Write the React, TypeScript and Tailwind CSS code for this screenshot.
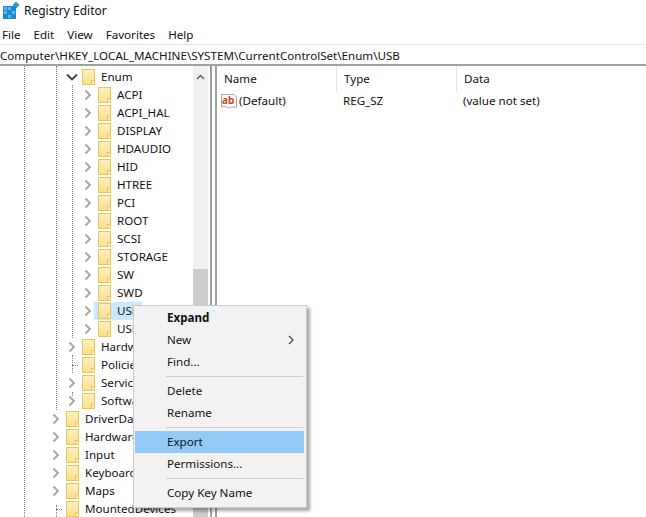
import React from 'react';

interface TreeRow {
  label: string;
  level: 0 | 1 | 2;
  chevron?: 'right' | 'down' | 'none';
  selected?: boolean;
}

const rows: TreeRow[] = [
  { label: 'Enum', level: 1, chevron: 'down' },
  { label: 'ACPI', level: 2 },
  { label: 'ACPI_HAL', level: 2 },
  { label: 'DISPLAY', level: 2 },
  { label: 'HDAUDIO', level: 2 },
  { label: 'HID', level: 2 },
  { label: 'HTREE', level: 2 },
  { label: 'PCI', level: 2 },
  { label: 'ROOT', level: 2 },
  { label: 'SCSI', level: 2 },
  { label: 'STORAGE', level: 2 },
  { label: 'SW', level: 2 },
  { label: 'SWD', level: 2 },
  { label: 'USB', level: 2, selected: true },
  { label: 'USBSTOR', level: 2 },
  { label: 'Hardware', level: 1 },
  { label: 'Policies', level: 1, chevron: 'none' },
  { label: 'Services', level: 1 },
  { label: 'Software', level: 1 },
  { label: 'DriverDatabase', level: 0 },
  { label: 'HardwareConfig', level: 0 },
  { label: 'Input', level: 0 },
  { label: 'Keyboard Layout', level: 0 },
  { label: 'Maps', level: 0 },
  { label: 'MountedDevices', level: 0, chevron: 'none' },
];

const levelPad = ['pl-[50px]', 'pl-[66px]', 'pl-[82px]'];

const RegeditIcon = () => (
  <svg width="20" height="20" viewBox="0 0 20 20" className="shrink-0">
    <rect x="3" y="5" width="13" height="13" fill="#1b8ad3" />
    <g fill="#5cb8ec">
      <rect x="4" y="6" width="3" height="3" />
      <rect x="8" y="6" width="3" height="3" />
      <rect x="4" y="10" width="3" height="3" />
      <rect x="12" y="10" width="3" height="3" />
      <rect x="8" y="14" width="3" height="3" />
    </g>
    <path d="M16 1l3 3-3 3-3-3z" fill="#2a9ad8" stroke="#0f6ea8" strokeWidth="0.6" />
  </svg>
);

const FolderIcon = () => (
  <svg width="13" height="16" viewBox="0 0 13 16" className="shrink-0">
    <defs>
      <linearGradient id="folderFill" x1="0" y1="0" x2="0" y2="1">
        <stop offset="0%" stopColor="#fdf0c0" />
        <stop offset="100%" stopColor="#fcdf8c" />
      </linearGradient>
    </defs>
    <rect x="0.5" y="0.5" width="12" height="15" fill="url(#folderFill)" stroke="#eac655" />
    <rect x="9.5" y="11.5" width="3" height="4" fill="#fdf0c0" stroke="#eac655" />
  </svg>
);

const Chevron = ({ kind }: { kind: 'right' | 'down' | 'none' }) => {
  if (kind === 'none') {
    return <span className="w-[6px] ml-[6px] shrink-0 self-center border-t border-dotted border-[#808080]" />;
  }
  return (
    <svg width="12" height="12" viewBox="0 0 12 12" className="shrink-0">
      {kind === 'right' ? (
        <path d="M3.5 1.5L8 6l-4.5 4.5" fill="none" stroke="#a6a6a6" strokeWidth="1.8" />
      ) : (
        <path d="M1 3.5l5 5 5-5" fill="none" stroke="#404040" strokeWidth="1.8" />
      )}
    </svg>
  );
};

const AbIcon = () => (
  <svg width="16" height="16" viewBox="0 0 16 16" className="shrink-0">
    <path d="M0.5 1.5H13l2.5 2.5V14c-2 1.5-3 -1-5 0s-3 1-5 0-3-1-5 0z" fill="#fff" stroke="#a8a8a8" />
    <text x="1" y="10.5" fontSize="10" fontWeight="700" fill="#d9431e">ab</text>
  </svg>
);

const Separator = () => <div className="h-px bg-[#cfcfcf] ml-[31px] mr-[1px] my-[3px]" />;

const MenuItem = ({ label, bold, active, arrow }: { label: string; bold?: boolean; active?: boolean; arrow?: boolean }) => (
  <div className={`h-[22px] flex items-center justify-between pl-[32px] pr-[10px] ${active ? 'bg-[#91c9f7]' : ''} ${bold ? 'font-bold' : ''}`}>
    <span>{label}</span>
    {arrow && (
      <svg width="6" height="10" viewBox="0 0 6 10">
        <path d="M1 1l4 4-4 4" fill="none" stroke="#404040" strokeWidth="1.2" />
      </svg>
    )}
  </div>
);

export default function App() {
  return (
    <div className="relative w-[646px] h-[517px] overflow-hidden bg-white text-[#111] text-[11.6px] font-['Noto_Sans',sans-serif] flex flex-col">
      {/* Title bar */}
      <div className="h-[22px] flex items-center shrink-0">
        <RegeditIcon />
        <span className="ml-[4px] text-[12px]">Registry Editor</span>
      </div>

      {/* Menu */}
      <div className="h-[22px] flex items-center shrink-0 pt-[4px] pl-[2px] gap-[13px]">
        <span>File</span>
        <span>Edit</span>
        <span>View</span>
        <span>Favorites</span>
        <span>Help</span>
      </div>

      {/* Address bar */}
      <div className="h-[22px] flex items-center shrink-0 pt-[3px] border-t border-[#e3e3e3] border-b-2 border-b-[#a0a0a0]">
        <span className="whitespace-nowrap">Computer\HKEY_LOCAL_MACHINE\SYSTEM\CurrentControlSet\Enum\USB</span>
      </div>

      <div className="flex-1 flex min-h-0">
        {/* Tree */}
        <div className="relative w-[193px] shrink-0 overflow-hidden pt-[2px]">
          <div className="absolute left-[24px] top-0 bottom-0 border-l border-dotted border-[#808080]" />
          <div className="absolute left-[56px] top-0 h-[344px] border-l border-dotted border-[#808080]" />
          <div className="absolute left-[56px] top-[439px] bottom-0 border-l border-dotted border-[#808080]" />
          <div className="absolute left-[72px] top-[19px] h-[253px] border-l border-dotted border-[#808080]" />
          <div className="absolute left-[72px] top-[289px] h-[18px] border-l border-dotted border-[#808080]" />
          <div className="absolute left-[72px] top-[326px] h-[4px] border-l border-dotted border-[#808080]" />
          {rows.map(row => (
            <div key={row.label} className={`relative h-[18px] flex items-center ${levelPad[row.level]}`}>
              <Chevron kind={row.chevron ?? 'right'} />
              <div className={`flex items-center h-[18px] pl-[4px] pr-[3px] ${row.selected ? 'bg-[#cce8ff]' : ''}`}>
                <FolderIcon />
                <span className="ml-[6px] -mt-px whitespace-nowrap">{row.label}</span>
              </div>
            </div>
          ))}
        </div>

        {/* Tree scrollbar */}
        <div className="w-[15px] shrink-0 bg-[#f0f0f0] flex flex-col">
          <div className="h-[22px] flex items-center justify-center shrink-0">
            <svg width="9" height="6" viewBox="0 0 9 6">
              <path d="M1 5l3.5-3.5L8 5" fill="none" stroke="#606060" strokeWidth="1.5" />
            </svg>
          </div>
          <div className="h-[181px] shrink-0" />
          <div className="flex-1 bg-[#cdcdcd]" />
        </div>

        {/* Splitter */}
        <div className="w-[7px] ml-[2px] shrink-0 border-x-2 border-[#a0a0a0]" />

        {/* Values */}
        <div className="flex-1 min-w-0">
          <div className="h-[26px] flex items-center">
            <div className="w-[120px] h-full flex items-center pl-[7px] border-r border-[#e5e5e5]">Name</div>
            <div className="w-[120px] h-full flex items-center pl-[7px] border-r border-[#e5e5e5]">Type</div>
            <div className="pl-[7px]">Data</div>
          </div>
          <div className="h-[18px] flex items-center">
            <div className="w-[120px] flex items-center pl-[4px]">
              <AbIcon />
              <span className="ml-[2px]">(Default)</span>
            </div>
            <div className="w-[120px] pl-[6px]">REG_SZ</div>
            <div className="pl-[6px]">(value not set)</div>
          </div>
        </div>
      </div>

      {/* Context menu */}
      <div className="absolute left-[133px] top-[305px] w-[174px] h-[203px] bg-[#f2f2f2] border border-[#cccccc] pt-px pb-px pl-px pr-[2px] shadow-[3px_3px_3px_rgba(0,0,0,0.35)]">
        <MenuItem label="Expand" bold />
        <MenuItem label="New" arrow />
        <MenuItem label="Find..." />
        <Separator />
        <MenuItem label="Delete" />
        <MenuItem label="Rename" />
        <Separator />
        <MenuItem label="Export" active />
        <MenuItem label="Permissions..." />
        <Separator />
        <MenuItem label="Copy Key Name" />
      </div>
    </div>
  );
}
